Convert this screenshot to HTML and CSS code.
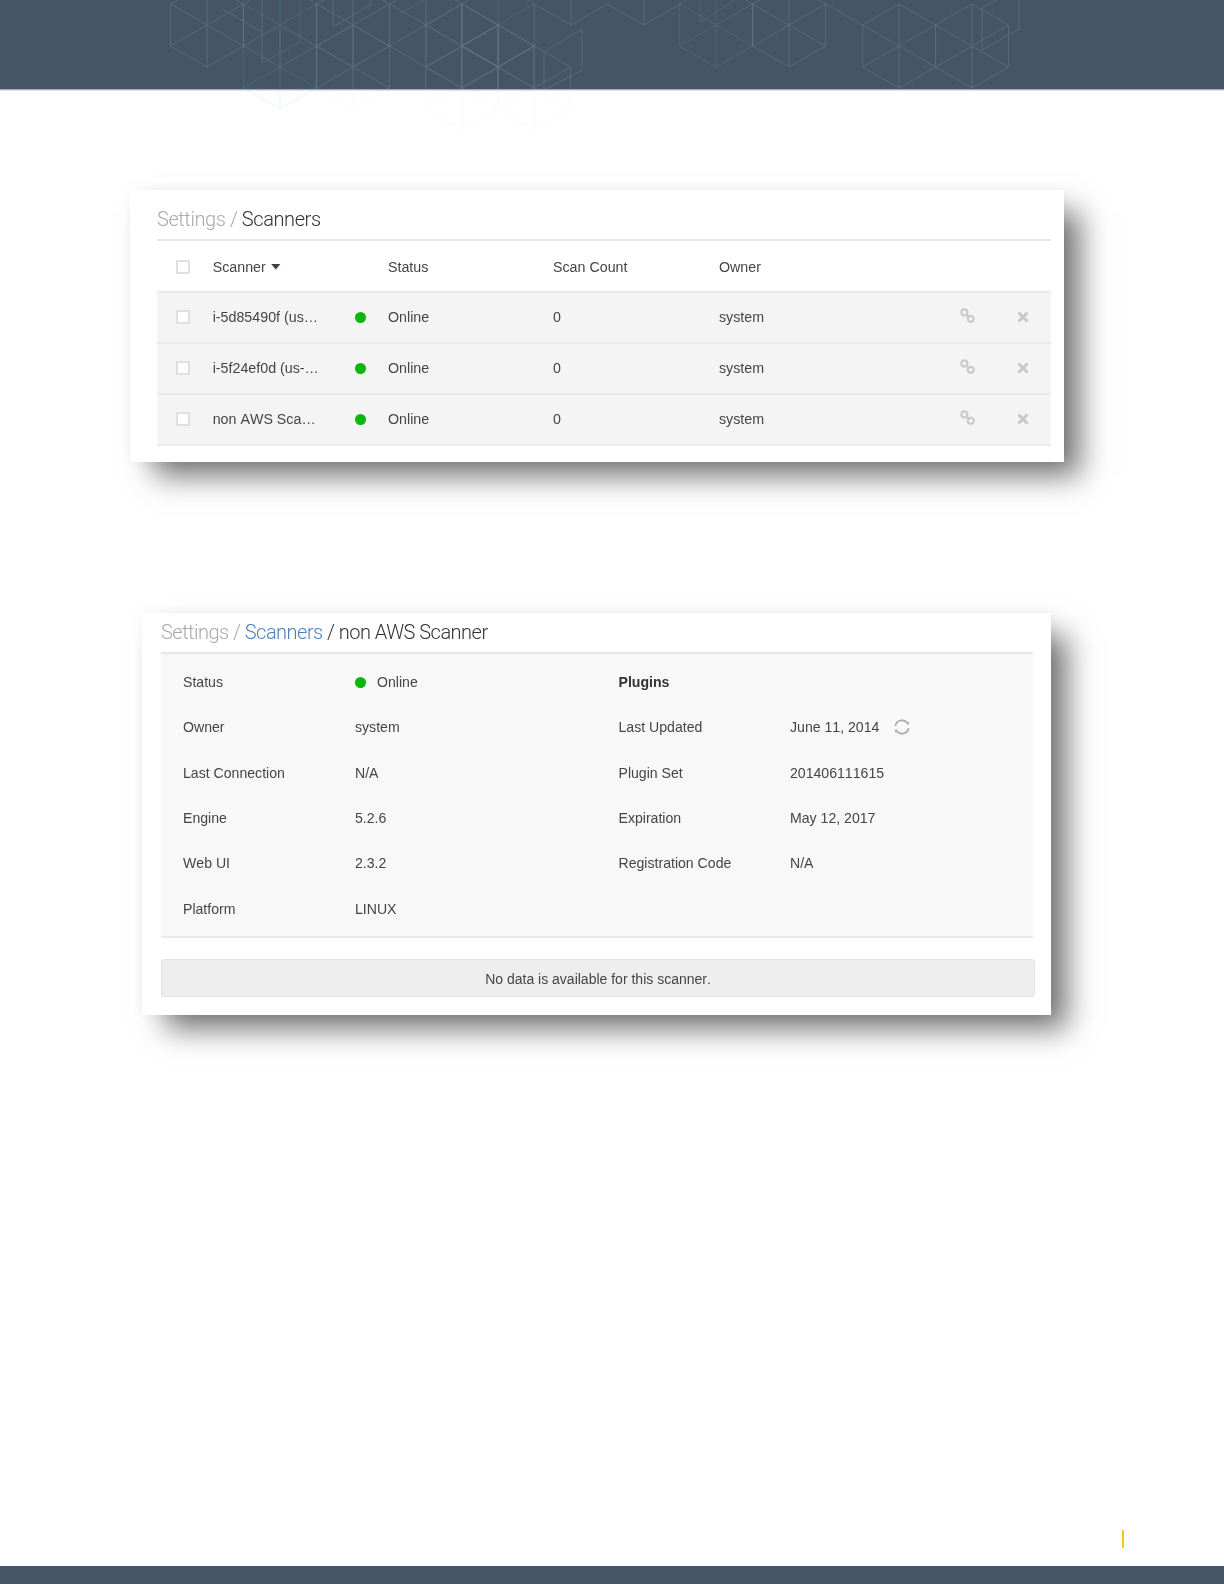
FILE: index.html
```html
<!DOCTYPE html>
<html lang="en">
<head>
<meta charset="utf-8">
<title>Settings / Scanners</title>
<link rel="stylesheet" href="styles.css">
</head>
<body>
<svg class="sprites" width="0" height="0" aria-hidden="true">
  <defs>
    <g id="hex">
      <path d="M0-42 36.4-21V21L0 42-36.4 21V-21ZM0-42V42M-36.4-21 36.4 21M-36.4 21 36.4-21"/>
    </g>
    <g id="cubes" fill="none">
      <g class="grey">
        <use href="#hex" x="207" y="25"/><use href="#hex" x="353" y="25"/><use href="#hex" x="426" y="25"/>
        <use href="#hex" x="462" y="46"/><use href="#hex" x="498" y="67"/><use href="#hex" x="462" y="88"/>
        <use href="#hex" x="534" y="88"/><use href="#hex" x="353" y="67"/><use href="#hex" x="789" y="25"/>
        <use href="#hex" x="899" y="46"/><use href="#hex" x="972" y="46"/>
        <path d="M534 4 571 25 607 4 644 25 680 4M571 0V25M644 0V25M826 4 862 25M224 10 262 32M333 0V27L370 5V0M544 52 582 29V70L544 90ZM982 8 1019-12V29L982 50ZM262 0V63"/>
      </g>
      <g class="blue">
        <use href="#hex" x="280" y="25"/><use href="#hex" x="280" y="67"/><use href="#hex" x="498" y="25"/><use href="#hex" x="716" y="25"/>
        <path d="M262 63 300 42V0M400 13 425 0M700 0V22L735 0"/>
      </g>
    </g>
    <clipPath id="clip-band"><rect x="0" y="0" width="1224" height="89"/></clipPath>
    <clipPath id="clip-below"><rect x="0" y="91" width="1224" height="60"/></clipPath>
    <g id="link-icon">
      <circle cx="4.4" cy="4.4" r="3"/><circle cx="10.8" cy="10.8" r="3"/><path d="M6.5 6.5 8.7 8.7"/>
    </g>
    <path id="x-icon" d="M1.5 1.5 10.5 10.5M10.5 1.5 1.5 10.5"/>
  </defs>
</svg>
<div class="page">
  <header class="band"></header>
  <svg class="pattern" width="1224" height="150" viewBox="0 0 1224 150" aria-hidden="true">
    <use href="#cubes" clip-path="url(#clip-band)" class="on-dark"/>
    <use href="#cubes" clip-path="url(#clip-below)" class="on-light"/>
  </svg>

  <main class="main">
    <section class="card card-list">
      <h1 class="title title-list"><span class="crumb-muted">Settings /</span> Scanners</h1>
      <div class="row row-head">
        <span class="check"></span>
        <span class="sort">Scanner <i class="caret"></i></span>
        <span></span>
        <span>Status</span>
        <span>Scan Count</span>
        <span>Owner</span>
      </div>
      <div class="row row-body">
        <span class="check"></span>
        <span>i-5d85490f (us…</span>
        <span class="dot"></span>
        <span>Online</span>
        <span>0</span>
        <span>system</span>
        <svg class="ico-link" width="16" height="16" viewBox="0 0 16 16"><use href="#link-icon"/></svg>
        <svg class="ico-x" width="12" height="12" viewBox="0 0 12 12"><use href="#x-icon"/></svg>
      </div>
      <div class="row row-body">
        <span class="check"></span>
        <span>i-5f24ef0d (us-…</span>
        <span class="dot"></span>
        <span>Online</span>
        <span>0</span>
        <span>system</span>
        <svg class="ico-link" width="16" height="16" viewBox="0 0 16 16"><use href="#link-icon"/></svg>
        <svg class="ico-x" width="12" height="12" viewBox="0 0 12 12"><use href="#x-icon"/></svg>
      </div>
      <div class="row row-body">
        <span class="check"></span>
        <span>non AWS Sca…</span>
        <span class="dot"></span>
        <span>Online</span>
        <span>0</span>
        <span>system</span>
        <svg class="ico-link" width="16" height="16" viewBox="0 0 16 16"><use href="#link-icon"/></svg>
        <svg class="ico-x" width="12" height="12" viewBox="0 0 12 12"><use href="#x-icon"/></svg>
      </div>
    </section>

    <section class="card card-detail">
      <h1 class="title title-detail"><span class="crumb-muted">Settings /</span> <a class="crumb-link">Scanners</a> / non AWS Scanner</h1>
      <div class="panel">
        <div class="info">
          <span>Status</span><span class="status"><i class="dot"></i>Online</span>
          <b class="plugins">Plugins</b><span></span>
          <span>Owner</span><span>system</span>
          <span>Last Updated</span>
          <span class="updated">June 11, 2014
            <svg class="ico-refresh" width="18" height="18" viewBox="0 0 18 18">
              <path d="M2.4 8A6.7 6.7 0 0 1 14.6 5.4M15.6 10A6.7 6.7 0 0 1 3.4 12.6"/>
              <path class="fill" d="M13.2 6.2 16 6.6 15.8 3.6ZM4.8 11.8 2 11.4 2.2 14.4Z"/>
            </svg>
          </span>
          <span>Last Connection</span><span>N/A</span>
          <span>Plugin Set</span><span>201406111615</span>
          <span>Engine</span><span>5.2.6</span>
          <span>Expiration</span><span>May 12, 2017</span>
          <span>Web UI</span><span>2.3.2</span>
          <span>Registration Code</span><span>N/A</span>
          <span>Platform</span><span>LINUX</span>
          <span></span><span></span>
        </div>
      </div>
      <div class="notice">No data is available for this scanner.</div>
    </section>
  </main>

  <div class="page-mark"></div>
  <footer class="foot"></footer>
</div>
</body>
</html>
```
FILE: styles.css
```css
* { box-sizing: border-box; }
html, body { margin: 0; padding: 0; background: #fff; }
body { font-family: "Liberation Sans", Arial, sans-serif; font-size: 14px; color: #454545; font-kerning: none; }

.sprites { position: absolute; }

.page { position: relative; height: 1584px; display: flex; flex-direction: column; overflow: hidden; }
.band { height: 90px; flex: none; background: #455565; border-bottom: 1px solid #a2aab2; box-shadow: 0 1px 0 #dfe2e5; }
.foot { height: 18px; flex: none; background: #455565; }
.page-mark { flex: none; align-self: flex-end; width: 2px; height: 18px; margin: 0 100px 18px 0; background: #fdc41e; }

.pattern { position: absolute; top: 0; left: 0; stroke-width: 1; filter: blur(.4px); }
.on-dark { --grey: #d5d9dd; --grey-o: .16; --blue: #6fc2c8; --blue-o: .18; }
.on-light { --grey: #8a9498; --grey-o: .05; --blue: #6fc2d2; --blue-o: .18; }
.grey { stroke: var(--grey); opacity: var(--grey-o); }
.blue { stroke: var(--blue); opacity: var(--blue-o); }

.main { flex: 1; display: flex; flex-direction: column; }

.card { background: #fff; filter: blur(.45px); box-shadow: 20px 18px 28px -4px rgba(0, 0, 0, .55), 0 0 16px rgba(0, 0, 0, .06); }
.card-list { width: 934px; height: 272px; margin: 100px 0 0 130px; padding: 0 13px 0 27px; }
.card-detail { width: 909px; height: 402px; margin: 151px 0 0 142px; padding: 0 18px 0 19px; }

.title { margin: 0; font-family: Roboto, "Liberation Sans", sans-serif; font-weight: 300; font-size: 20px; letter-spacing: -.52px; font-kerning: normal; color: #333; border-bottom: 2px solid #e6e6e6; }
.title-list { height: 51px; line-height: 58px; letter-spacing: -.42px; }
.title-detail { height: 41px; line-height: 38px; }
.crumb-muted { color: #aaa; }
.crumb-link { color: #4a7fc0; }

.row { display: grid; grid-template-columns: 36.7px 142.3px 33px 165px 166px 241px 57px 12px; align-items: center; padding-left: 19px; height: 51px; border-bottom: 2px solid #eaeaea; font-size: 14.25px; }
.row-head { height: 52px; padding-top: 1px; background: #fff; }
.row-body { padding-bottom: 1px; background: #f4f4f4; }

.check { width: 14px; height: 14px; border: 2px solid #e0e0e0; background: #fff; }
.sort { display: flex; align-items: center; gap: 5px; }
.caret { width: 10px; height: 6px; background: #3f3f3f; clip-path: polygon(0 0, 100% 0, 50% 100%); }

.dot { display: block; width: 11px; height: 11px; border-radius: 50%; background: #0cb60c; }

.ico-link { fill: none; stroke: #cbcbcb; stroke-width: 2.2; margin-top: -2px; }
.ico-x { fill: none; stroke: #c9c9c9; stroke-width: 3; margin-top: -1px; }

.panel { background: #f8f8f8; border-bottom: 2px solid #eaeaea; height: 284px; padding: 5.5px 0 0 22px; font-size: 14.1px; }
.info { display: grid; grid-template-columns: 172px 263.5px 171.5px 1fr; grid-auto-rows: 45.3px; align-items: center; }
.status { display: flex; align-items: center; gap: 11px; }
.plugins { color: #333; }
.updated { display: flex; align-items: center; gap: 14px; }
.ico-refresh { fill: none; stroke: #a8a8a8; stroke-width: 1.6; margin-top: -1px; }
.ico-refresh .fill { fill: #a8a8a8; stroke: none; }

.notice { width: 874px; height: 38px; margin-top: 21px; line-height: 38px; text-align: center; background: #eee; border: 1px solid #e2e2e2; border-radius: 3px; color: #444; }
```
